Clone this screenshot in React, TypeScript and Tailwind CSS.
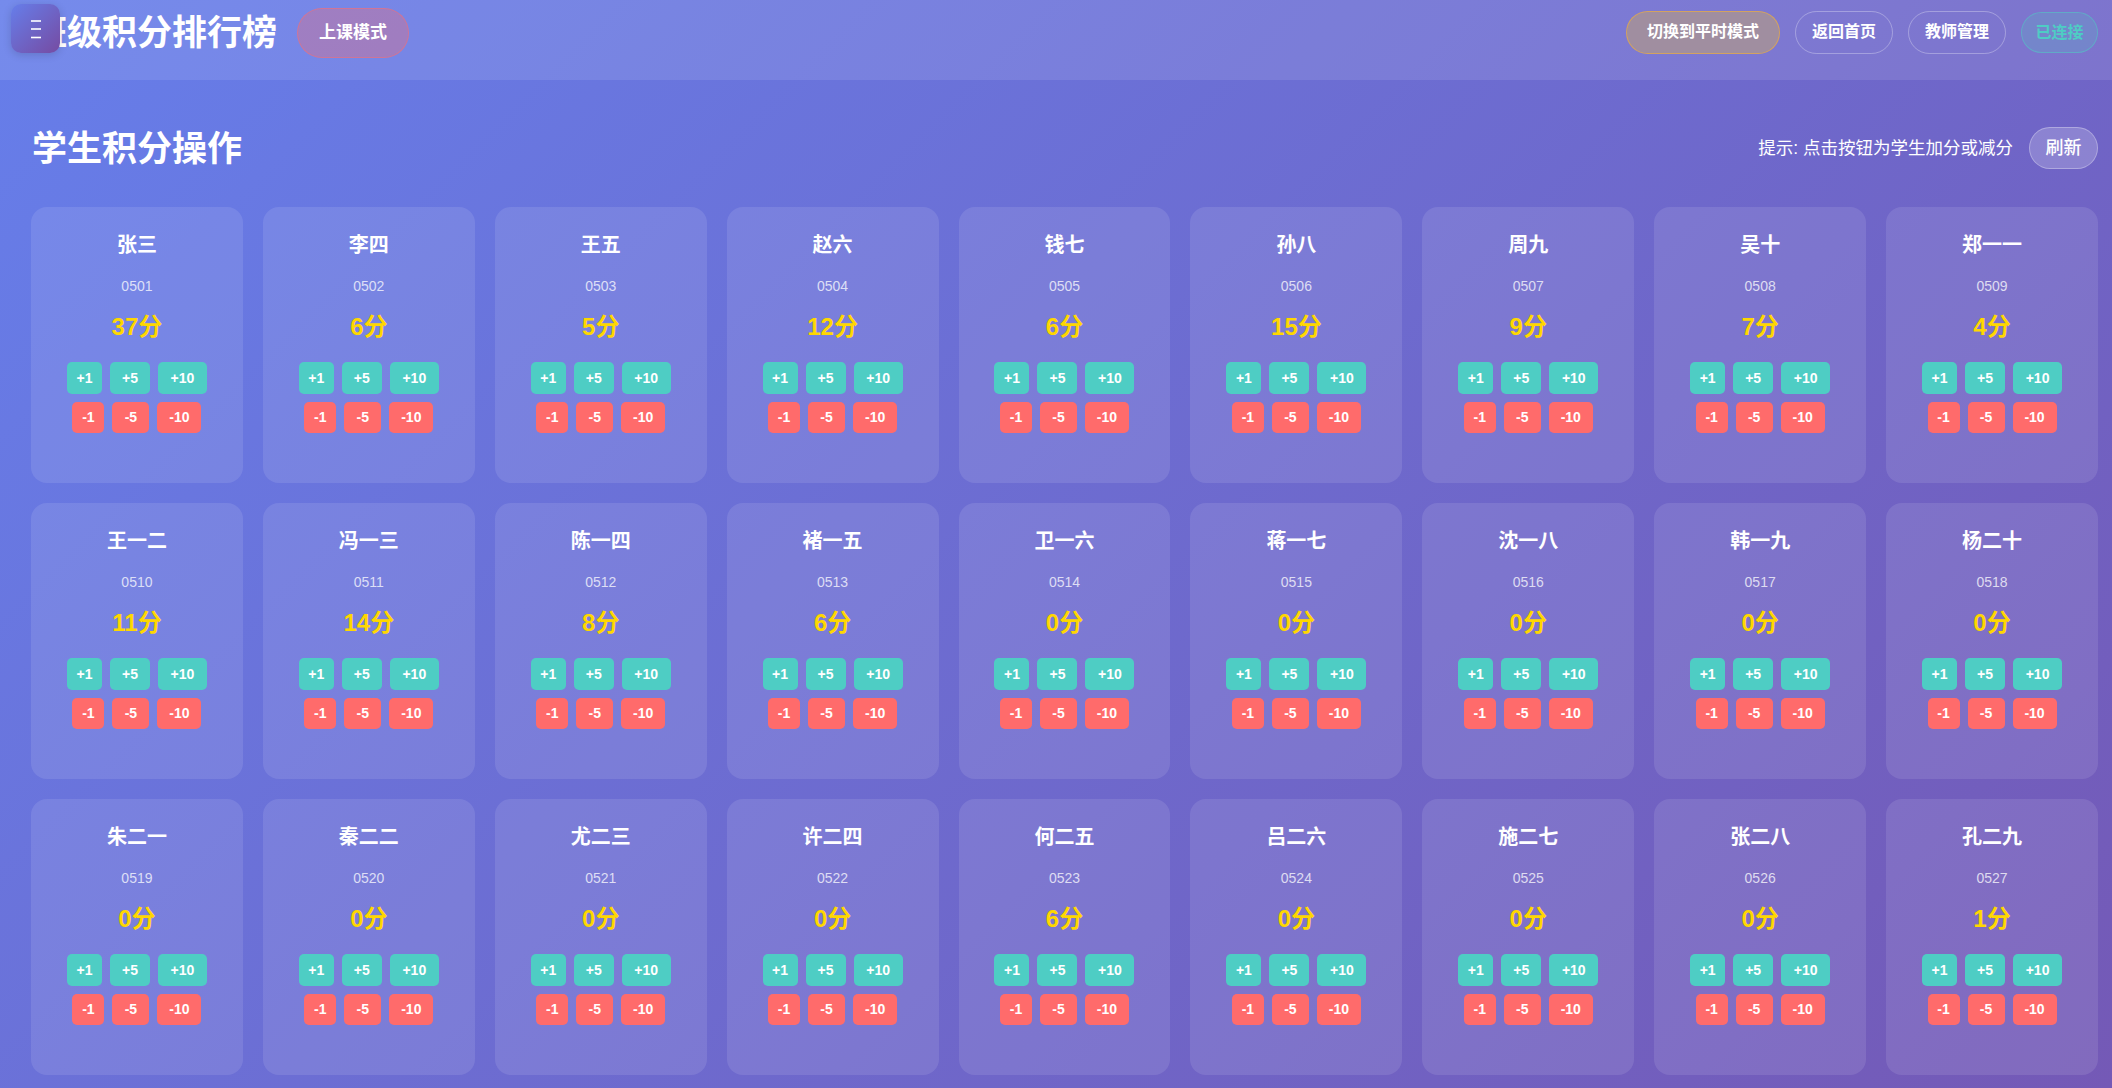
import React from "react";

type Student = { name: string; id: string; score: number };

const students: Student[] = [
  { name: "张三", id: "0501", score: 37 },
  { name: "李四", id: "0502", score: 6 },
  { name: "王五", id: "0503", score: 5 },
  { name: "赵六", id: "0504", score: 12 },
  { name: "钱七", id: "0505", score: 6 },
  { name: "孙八", id: "0506", score: 15 },
  { name: "周九", id: "0507", score: 9 },
  { name: "吴十", id: "0508", score: 7 },
  { name: "郑一一", id: "0509", score: 4 },
  { name: "王一二", id: "0510", score: 11 },
  { name: "冯一三", id: "0511", score: 14 },
  { name: "陈一四", id: "0512", score: 8 },
  { name: "褚一五", id: "0513", score: 6 },
  { name: "卫一六", id: "0514", score: 0 },
  { name: "蒋一七", id: "0515", score: 0 },
  { name: "沈一八", id: "0516", score: 0 },
  { name: "韩一九", id: "0517", score: 0 },
  { name: "杨二十", id: "0518", score: 0 },
  { name: "朱二一", id: "0519", score: 0 },
  { name: "秦二二", id: "0520", score: 0 },
  { name: "尤二三", id: "0521", score: 0 },
  { name: "许二四", id: "0522", score: 0 },
  { name: "何二五", id: "0523", score: 6 },
  { name: "吕二六", id: "0524", score: 0 },
  { name: "施二七", id: "0525", score: 0 },
  { name: "张二八", id: "0526", score: 0 },
  { name: "孔二九", id: "0527", score: 1 },
];

const plusButtons = [
  { label: "+1", cls: "w-[35px]" },
  { label: "+5", cls: "w-[40px]" },
  { label: "+10", cls: "w-[49px]" },
];

const minusButtons = [
  { label: "-1", cls: "w-[32px]" },
  { label: "-5", cls: "w-[37px]" },
  { label: "-10", cls: "w-[44px]" },
];

function StudentCard({ student }: { student: Student }) {
  return (
    <div className="flex h-[276px] flex-col items-center rounded-[16px] bg-white/10 pt-[26px]">
      <div className="text-[20px] font-bold leading-[24px] text-white">{student.name}</div>
      <div className="mt-[19px] text-[14px] leading-[20px] text-white/75">{student.id}</div>
      <div className="mt-[15px] text-[24px] font-bold leading-[32px] text-[#ffd700]">{student.score}分</div>
      <div className="mt-[19px] flex gap-[8px]">
        {plusButtons.map((b) => (
          <button
            key={b.label}
            className={`${b.cls} flex h-[32px] items-center justify-center rounded-[5px] bg-[#4ecdc4] text-[14px] font-bold text-white`}
          >
            {b.label}
          </button>
        ))}
      </div>
      <div className="mt-[8px] flex gap-[8px]">
        {minusButtons.map((b) => (
          <button
            key={b.label}
            className={`${b.cls} flex h-[31px] items-center justify-center rounded-[5px] bg-[#ff6b6b] text-[14px] font-bold text-white`}
          >
            {b.label}
          </button>
        ))}
      </div>
    </div>
  );
}

export default function App() {
  return (
    <div
      className="relative h-[1088px] w-full overflow-hidden bg-[linear-gradient(135deg,#667eea_0%,#7459b6_100%)] text-white"
      style={{ fontFamily: '"Liberation Sans", "Noto Sans CJK SC", sans-serif' }}
    >
      <button className="absolute left-[11px] top-[4px] z-10 flex h-[49px] w-[49px] items-center justify-center rounded-[10px] bg-[linear-gradient(135deg,#667eea,#764ba2)] shadow-[0_2px_8px_rgba(0,0,0,0.15)]">
        <svg width="12" height="20" viewBox="0 0 12 20" className="ml-[1px]">
          <line x1="1" y1="2" x2="11" y2="2" stroke="white" strokeWidth="1.6" />
          <line x1="1" y1="10" x2="11" y2="10" stroke="white" strokeWidth="1.6" />
          <line x1="1" y1="18.5" x2="11" y2="18.5" stroke="white" strokeWidth="1.6" />
        </svg>
      </button>

      <header className="h-[80px] bg-white/10">
        <div className="flex h-[64px] items-center justify-between pl-[32px] pr-[14px]">
          <div className="flex items-center">
            <h1 className="text-[35px] font-bold leading-none text-white">班级积分排行榜</h1>
            <button className="ml-[20px] mt-[1px] h-[50px] w-[112px] rounded-full border border-[#ff6b6b]/50 bg-[#ff6b6b]/30 text-[17px] font-bold text-white">
              上课模式
            </button>
          </div>
          <div className="flex items-center gap-[15px]">
            <button className="h-[43px] w-[154px] rounded-full border border-[#e0a850]/80 bg-[#a08ea0] text-[16px] font-bold text-white">
              切换到平时模式
            </button>
            <button className="h-[43px] w-[98px] rounded-full border border-white/30 text-[16px] font-bold text-white">
              返回首页
            </button>
            <button className="h-[43px] w-[98px] rounded-full border border-white/30 text-[16px] font-bold text-white">
              教师管理
            </button>
            <button className="mt-[1px] h-[41px] w-[77px] rounded-full border border-[#4ecdc4]/50 bg-[#4ecdc4]/20 text-[16px] font-bold text-[#4ecdc4]">
              已连接
            </button>
          </div>
        </div>
      </header>

      <main className="pl-[31px] pr-[14px]">
        <div className="mt-[47px] flex h-[42px] items-center justify-between">
          <h2 className="ml-[1px] text-[35px] font-bold leading-none text-white">学生积分操作</h2>
          <div className="flex items-center gap-[16px]">
            <span className="text-[17.5px] text-white">提示: 点击按钮为学生加分或减分</span>
            <button className="h-[42px] w-[69px] rounded-[21px] border border-white/30 bg-white/20 text-[18px] font-medium text-white">
              刷新
            </button>
          </div>
        </div>

        <div className="mt-[38px] grid grid-cols-9 gap-x-[20px] gap-y-[20px]">
          {students.map((s) => (
            <StudentCard key={s.id} student={s} />
          ))}
        </div>
      </main>
    </div>
  );
}
